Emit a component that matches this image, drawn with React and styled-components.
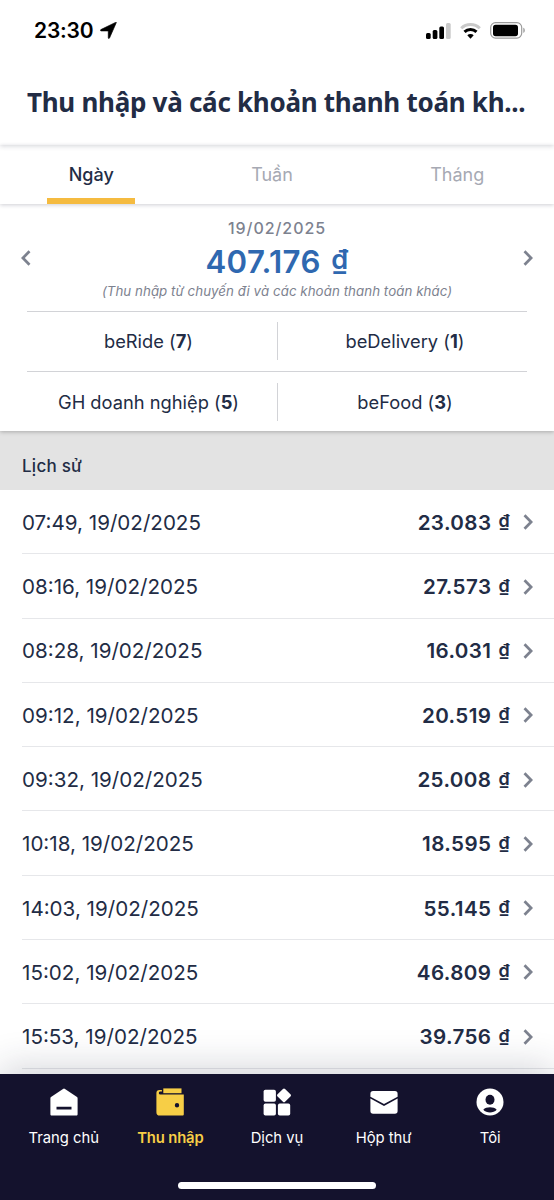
import { useState } from "react";
import styled, { createGlobalStyle } from "styled-components";

const GlobalStyle = createGlobalStyle`
    * {
        box-sizing: border-box;
    }
    body {
        margin: 0;
        background: white;
        font-family: Inter, "Liberation Sans", sans-serif;
        color: #222c45;
    }
`;

const Screen = styled.div`
    width: 554px;
    height: 1200px;
    display: flex;
    flex-direction: column;
    overflow: hidden;
    background: white;
`;

const StatusBar = styled.div`
    height: 61px;
    flex-shrink: 0;
    display: flex;
    align-items: center;
    justify-content: space-between;
    padding: 0 28px 0 34px;
    color: black;
`;

const Clock = styled.div`
    display: flex;
    align-items: center;
    gap: 7px;
    font-size: 21px;
    font-weight: 600;
    letter-spacing: -0.2px;
`;

const StatusIcons = styled.div`
    display: flex;
    align-items: center;
    gap: 9px;
`;

const Header = styled.header`
    height: 84px;
    flex-shrink: 0;
    display: flex;
    align-items: center;
    padding: 0 27px 2px;
    position: relative;
    z-index: 2;
    box-shadow: 0 1px 5px rgba(30, 34, 60, 0.2);
    clip-path: inset(0 0 -12px 0);
`;

const Title = styled.h1`
    margin: 0;
    font-family: "Noto Sans", sans-serif;
    font-size: 26px;
    font-weight: 700;
    line-height: 36px;
    letter-spacing: -0.28px;
    white-space: nowrap;
`;

const Tabs = styled.nav`
    height: 59px;
    flex-shrink: 0;
    padding-right: 1px;
    display: flex;
    justify-content: space-around;
    box-shadow: 0 1px 4px rgba(30, 34, 60, 0.22);
`;

const Tab = styled.button`
    padding: 5px 21.7px 0;
    border: none;
    border-bottom: 6px solid ${(props) => (props.$active ? "#f5bb40" : "transparent")};
    background: none;
    font-family: inherit;
    font-size: 18px;
    font-weight: ${(props) => (props.$active ? 500 : 400)};
    letter-spacing: 0;
    color: ${(props) => (props.$active ? "#222c45" : "#a6a9b3")};
    cursor: pointer;
`;

const Summary = styled.section`
    height: 227px;
    flex-shrink: 0;
    padding: 14px 27px 0;
    position: relative;
    z-index: 1;
    box-shadow: 0 1px 4px rgba(0, 0, 0, 0.25);
    clip-path: inset(0 0 -10px 0);
`;

const DayPicker = styled.div`
    height: 92.5px;
    margin: 0 -7px;
    display: flex;
    align-items: flex-start;
    justify-content: space-between;
`;

const ArrowButton = styled.button`
    width: 12px;
    height: 16px;
    margin-top: 32px;
    padding: 0;
    border: none;
    background: none;
    display: flex;
    cursor: pointer;
`;

const DayTotal = styled.div`
    display: flex;
    flex-direction: column;
    align-items: center;
`;

const Day = styled.span`
    font-size: 16px;
    font-weight: 500;
    line-height: 20px;
    letter-spacing: 0.95px;
    color: #7d828f;
`;

const Total = styled.span`
    height: 45px;
    font-size: 31.2px;
    font-weight: 600;
    line-height: 48px;
    letter-spacing: 0.4px;
    color: #2f68b0;
`;

/* The dong sign sits on the baseline, no taller than the digits */
const Dong = styled.span`
    position: relative;
    top: -0.14em;
    margin-left: 0.08em;
    font-size: 0.87em;
    line-height: 0;
`;

const Hint = styled.span`
    font-size: 13.3px;
    font-style: italic;
    line-height: 16px;
    letter-spacing: 0.05px;
    color: #7d828f;
`;

const ServiceGrid = styled.div`
    display: grid;
    grid-template-columns: 251px 1fr;
    grid-auto-rows: 60.5px;
`;

const Service = styled.div`
    display: flex;
    align-items: center;
    border-top: 1.5px solid #d2d3d7;

    & > span {
        flex: 1;
        height: 38px;
        padding-left: 5px;
        line-height: 39px;
        text-align: center;
        font-size: 18.3px;
        letter-spacing: 0;
        white-space: nowrap;
    }
    &:nth-child(odd) > span {
        padding: 0 7px 0 0;
        border-right: 1.5px solid #d2d3d7;
    }
`;

const HistoryLabel = styled.div`
    height: 59px;
    flex-shrink: 0;
    padding: 10px 22px 0;
    display: flex;
    align-items: center;
    background: #e3e3e3;
    font-size: 17px;
    font-weight: 500;
    letter-spacing: 0.25px;
`;

const History = styled.div`
    flex: 1;
    min-height: 0;
    overflow: hidden;
`;

const Trip = styled.div`
    height: 64.3px;
    margin-left: 22px;
    padding: 1.4px 20px 0 0;
    display: flex;
    align-items: center;
    border-bottom: 1.5px solid #e6e7ea;
`;

const TripTime = styled.span`
    flex: 1;
    font-size: 20.6px;
    letter-spacing: 0;
`;

const TripAmount = styled.span`
    margin-right: 12px;
    font-size: 20.6px;
    font-weight: 600;
    letter-spacing: 0.4px;
`;

const BottomBar = styled.footer`
    height: 126px;
    flex-shrink: 0;
    position: relative;
    display: flex;
    flex-direction: column;
    align-items: center;
    justify-content: space-between;
    padding-bottom: 11px;
    background: #14122d;
    box-shadow: 0 -6px 36px rgba(30, 34, 60, 0.2);
`;

const Menu = styled.div`
    width: 100%;
    padding: 0 10.5px;
    display: grid;
    grid-template-columns: repeat(5, 1fr);
`;

const MenuItem = styled.button`
    padding: 14px 0 0;
    border: none;
    background: none;
    display: flex;
    flex-direction: column;
    align-items: center;
    gap: 12px;
    font-family: inherit;
    font-size: 14.8px;
    font-weight: ${(props) => (props.$active ? 600 : 400)};
    line-height: 20px;
    letter-spacing: ${(props) => (props.$active ? "-0.15px" : "0")};
    white-space: nowrap;
    color: ${(props) => (props.$active ? "#f7ce46" : "white")};
    cursor: pointer;
`;

const HomeIndicator = styled.div`
    width: 198px;
    height: 7px;
    border-radius: 4px;
    background: white;
`;

const LocationIcon = () => (
    <svg width="17" height="17" viewBox="0 0 17 17">
        <path d="M16.300.6 9.500 16c-.3.700-1.200.6-1.200-.2V8.900H1.200C.3 8.900.2 8 .9 7.600L15.600.4c.5-.2.9-.2.7.2Z" fill="black" stroke="black" strokeWidth=".7" />
    </svg>
);

const SignalIcon = () => (
    <svg width="25" height="16" viewBox="0 0 25 16">
        <rect x="0" y="10" width="4.700" height="6" rx="1.500" />
        <rect x="6.700" y="7" width="4.700" height="9" rx="1.500" />
        <rect x="13.300" y="3.500" width="4.700" height="12.500" rx="1.500" />
        <rect x="20" y="0" width="4.700" height="16" rx="1.500" fill="#c9c9c9" />
    </svg>
);

const WifiIcon = () => (
    <svg width="21" height="16" viewBox="0 0 21 16">
        <path d="M1.200 5.300a13.300 13.300 0 0 1 18.600 0" fill="none" stroke="#c9c9c9" strokeWidth="3" />
        <path d="M4.500 8.900a8.600 8.600 0 0 1 12 0" fill="none" stroke="black" strokeWidth="3" />
        <path d="M7.300 12.200a4.600 4.600 0 0 1 6.400 0l-3.200 3.500Z" />
    </svg>
);

const BatteryIcon = () => (
    <svg width="36" height="17" viewBox="0 0 36 17">
        <rect x=".7" y=".7" width="31" height="15.400" rx="4.800" fill="none" stroke="#9b9b9b" strokeWidth="1.200" />
        <rect x="3" y="2.800" width="25" height="11.400" rx="2.600" />
        <path d="M33.300 5.800c2 .6 2 4.600 0 5.200Z" fill="#9b9b9b" />
    </svg>
);

const Chevron = ({ left }) => (
    <svg width="12" height="16" viewBox="0 0 12 16">
        <path
            d={left ? "M9.500 1.300 2.900 8l6.600 6.700" : "M2.500 1.300 9.100 8l-6.600 6.700"}
            fill="none"
            stroke="#7d828f"
            strokeWidth="2.700"
        />
    </svg>
);

const HomeIcon = () => (
    <svg width="28" height="28" viewBox="0 0 28 28" fill="currentColor">
        <path fillRule="evenodd" d="M13 .9a1.800 1.800 0 0 1 2 0L27 9a1.500 1.500 0 0 1 .6 1.200v16.100c0 .8-.5 1.300-1.300 1.300H1.700c-.8 0-1.300-.5-1.300-1.300V10.200C.4 9.700.6 9.300 1 9ZM6.500 18.700v2.900h15v-2.900Z" />
    </svg>
);

const WalletIcon = () => (
    <svg width="28" height="28" viewBox="0 0 28 28" fill="currentColor">
        <path d="M7.300.4h18.200v4.800H7.300Z" />
        <path fillRule="evenodd" d="M3.500 2H5.900v1.600H4c-1.500 0-1.500 3 0 3h23.800v19.700c0 .8-.5 1.300-1.300 1.300H3.800A3.400 3.400 0 0 1 .4 24.200V5.100A3.100 3.100 0 0 1 3.500 2ZM21 15a2.200 2.200 0 1 0 0 4.400 2.200 2.200 0 0 0 0-4.400Z" />
    </svg>
);

const ServicesIcon = () => (
    <svg width="28" height="28" viewBox="0 0 28 28" fill="currentColor">
        <rect x=".6" y="1.700" width="12.300" height="12" rx="1.800" />
        <rect x=".6" y="15.600" width="12.300" height="12" rx="1.800" />
        <rect x="14.900" y="15.600" width="12.300" height="12" rx="1.800" />
        <rect x="15.700" y="2.100" width="10.600" height="10.600" rx="1.500" transform="rotate(45 21 7.400)" />
    </svg>
);

const MailIcon = () => (
    <svg width="28" height="28" viewBox="0 0 28 28" fill="currentColor">
        <path d="M.4 5.700A2.700 2.700 0 0 1 3.100 3h21.800a2.700 2.700 0 0 1 2.700 2.700V8.700L14 15.900.4 8.700Z" />
        <path d="M.4 10.500 14 17.900l13.600-7.400v12.600a2.700 2.700 0 0 1-2.700 2.700H3.100a2.700 2.700 0 0 1-2.700-2.700Z" />
    </svg>
);

const UserIcon = () => (
    <svg width="28" height="28" viewBox="0 0 28 28">
        <circle cx="14" cy="14" r="13.500" fill="currentColor" />
        <ellipse cx="14" cy="11.800" rx="4.500" ry="5" fill="#14122d" />
        <path d="M7.300 21.700c2.900-3.200 10.500-3.200 13.400 0-3.200 3.700-10.200 3.700-13.400 0Z" fill="#14122d" />
    </svg>
);

const tabs = ["Ngày", "Tuần", "Tháng"];

const services = [
    { name: "beRide", count: 7 },
    { name: "beDelivery", count: 1 },
    { name: "GH doanh nghiệp", count: 5 },
    { name: "beFood", count: 3 },
];

const trips = [
    { time: "07:49", amount: "23.083" },
    { time: "08:16", amount: "27.573" },
    { time: "08:28", amount: "16.031" },
    { time: "09:12", amount: "20.519" },
    { time: "09:32", amount: "25.008" },
    { time: "10:18", amount: "18.595" },
    { time: "14:03", amount: "55.145" },
    { time: "15:02", amount: "46.809" },
    { time: "15:53", amount: "39.756" },
];

const menus = [
    { label: "Trang chủ", Icon: HomeIcon },
    { label: "Thu nhập", Icon: WalletIcon },
    { label: "Dịch vụ", Icon: ServicesIcon },
    { label: "Hộp thư", Icon: MailIcon },
    { label: "Tôi", Icon: UserIcon },
];

const App = () => {
    const [selectedTab, setSelectedTab] = useState("Ngày");
    const [selectedMenu, setSelectedMenu] = useState("Thu nhập");
    const date = "19/02/2025";

    return (
        <Screen>
            <GlobalStyle />
            <StatusBar>
                <Clock>
                    23:30
                    <LocationIcon />
                </Clock>
                <StatusIcons>
                    <SignalIcon />
                    <WifiIcon />
                    <BatteryIcon />
                </StatusIcons>
            </StatusBar>

            <Header>
                <Title>Thu nhập và các khoản thanh toán kh...</Title>
            </Header>

            <Tabs>
                {tabs.map((tab) => (
                    <Tab key={tab} $active={tab === selectedTab} onClick={() => setSelectedTab(tab)}>
                        {tab}
                    </Tab>
                ))}
            </Tabs>

            <Summary>
                <DayPicker>
                    <ArrowButton aria-label="Ngày trước">
                        <Chevron left />
                    </ArrowButton>
                    <DayTotal>
                        <Day>{date}</Day>
                        <Total>407.176 <Dong>₫</Dong></Total>
                        <Hint>(Thu nhập từ chuyến đi và các khoản thanh toán khác)</Hint>
                    </DayTotal>
                    <ArrowButton aria-label="Ngày sau">
                        <Chevron />
                    </ArrowButton>
                </DayPicker>
                <ServiceGrid>
                    {services.map((service) => (
                        <Service key={service.name}>
                            <span>
                                {service.name} (<b>{service.count}</b>)
                            </span>
                        </Service>
                    ))}
                </ServiceGrid>
            </Summary>

            <HistoryLabel>Lịch sử</HistoryLabel>
            <History>
                {trips.map((trip) => (
                    <Trip key={trip.time}>
                        <TripTime>{trip.time}, {date}</TripTime>
                        <TripAmount>{trip.amount} <Dong>₫</Dong></TripAmount>
                        <Chevron />
                    </Trip>
                ))}
            </History>

            <BottomBar>
                <Menu>
                    {menus.map(({ label, Icon }) => (
                        <MenuItem key={label} $active={label === selectedMenu} onClick={() => setSelectedMenu(label)}>
                            <Icon />
                            {label}
                        </MenuItem>
                    ))}
                </Menu>
                <HomeIndicator />
            </BottomBar>
        </Screen>
    );
};

export default App;
